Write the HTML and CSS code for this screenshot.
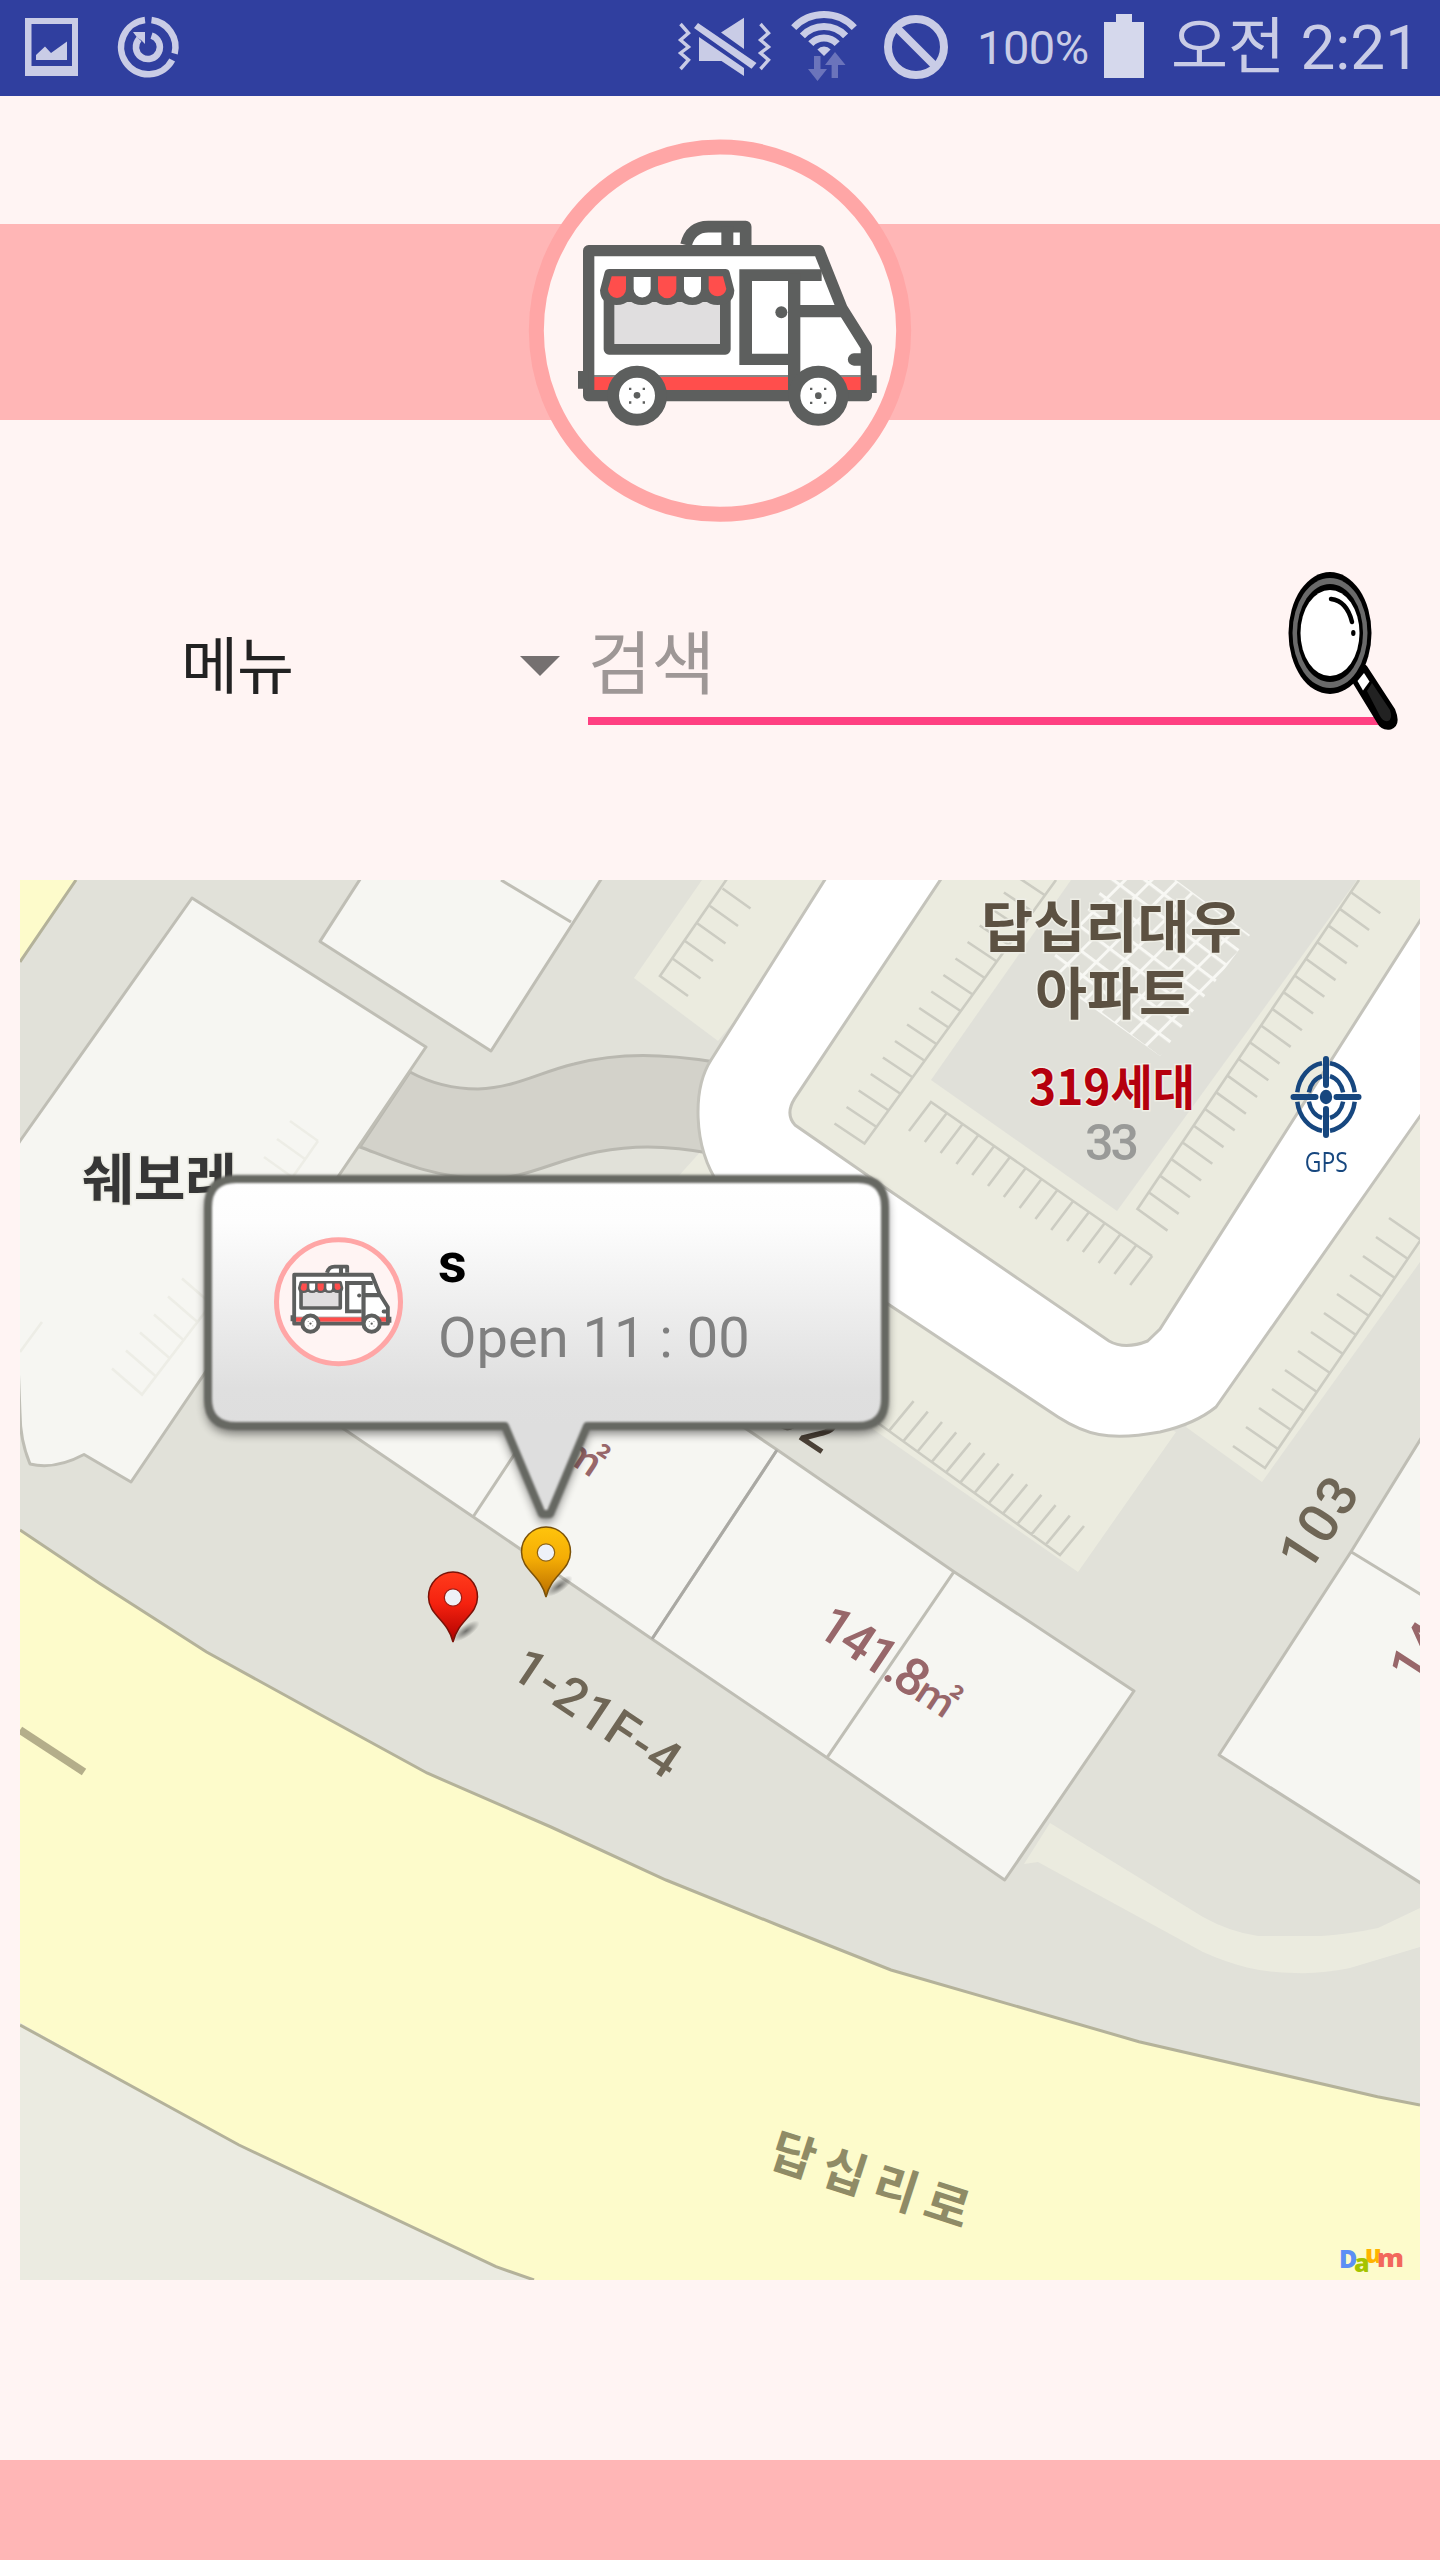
FILE: index.html
```html
<!DOCTYPE html>
<html lang="ko">
<head>
<meta charset="utf-8">
<title>푸드트럭 지도</title>
<link rel="stylesheet" href="styles.css">
</head>
<body>
<svg class="defs" width="0" height="0" aria-hidden="true">
  <symbol id="truck" viewBox="0 0 1200 1200">
    <circle cx="600" cy="602" r="551" fill="#fff4f3" stroke="#ffa6a6" stroke-width="45"/>
    <path d="M498 345q14-55 67-55h112v55" fill="#fff" stroke="#5d5f5e" stroke-width="35" stroke-linejoin="round"/>
    <path d="M622 290v60" stroke="#5d5f5e" stroke-width="36"/>
    <path d="M206 363H898L966 530 1039 652V797H206z" fill="#fff"/>
    <path d="M222 741H1023V780H222z" fill="#ff4e4c"/>
    <path d="M222 738H1023" stroke="#5d5f5e" stroke-width="4"/>
    <path d="M206 362H897L966 535 1039 651V797H206z" fill="none" stroke="#5d5f5e" stroke-width="34" stroke-linejoin="round"/>
    <path d="M174 723h32v53h-32zM1040 736h30v53h-30z" fill="#5d5f5e"/>
    <path d="M658 418H905V453H696V671H806V705H658z" fill="#5d5f5e"/>
    <path d="M804 430h37v370h-37zM836 525h130v37h-130zM1026 670h-24a18 18 0 0 0 0 37h24z" fill="#5d5f5e"/>
    <circle cx="784" cy="547" r="18" fill="#5d5f5e"/>
    <path d="M267 500V658H616V500z" fill="#e0dedf" stroke="#5d5f5e" stroke-width="32" stroke-linejoin="round"/>
    <path d="M268 417H616q10 0 13 10l14 54q-2 44-50 44-26 0-38-14-14 14-38 14t-38-14q-13 14-38 14t-38-14q-12 14-37 14t-38-14q-14 14-38 14-48 0-50-44l14-54q3-10 14-10z" fill="#5d5f5e"/>
    <path d="M275 439h43v38a27 27 0 0 1-54 0zM414 439h55v38a27 27 0 0 1-55 0zM566 439h43l10 38a27 27 0 0 1-53 0z" fill="#ff4e4c"/>
    <path d="M341 441h51v36a25 25 0 0 1-51 0zM492 441h51v36a25 25 0 0 1-51 0z" fill="#fff"/>
    <g fill="#fff" stroke="#5d5f5e" stroke-width="36"><circle cx="351" cy="797" r="72"/><circle cx="895" cy="797" r="72"/></g>
    <g fill="#5d5f5e"><circle cx="351" cy="796" r="10"/><circle cx="895" cy="797" r="10"/>
    <path d="M327 773h7v7h-7zM368 773h7v7h-7zM327 814h7v7h-7zM368 814h7v7h-7zM870 773h7v7h-7zM912 773h7v7h-7zM870 815h7v7h-7zM912 815h7v7h-7z"/></g>
  </symbol>
</svg>

<header class="status">
  <svg class="photo" width="64" height="96" viewBox="20 0 64 96"><path fill-rule="evenodd" d="M25 18h53v58H25zM31.500 24v42H72V24z"/><path d="M36 60v-5l9-8.500 6 6.500 16-11.500V60z"/></svg>
  <svg class="sync" width="72" height="96" viewBox="112 0 72 96"><g fill="none" stroke="#c9cce6" stroke-width="6.500"><path d="M145 20.100A27.200 27.200 0 1 0 172.200 60"/><path d="M151.500 20.100A27.200 27.200 0 0 1 174.600 53.600"/><path d="M151.500 35.600A12 12 0 1 1 139 39"/></g><path d="M133 32h12v12l-4-4-3.500-2z"/></svg>
  <svg class="mute" width="96" height="96" viewBox="676 0 96 96"><path d="M698 23l58.500 40-5 5.700L694 28zM744 17.700V49l-23-16.500zM699 37l45 31v8l-22.500-15H699z"/><path d="M680.500 24l8 9-8 7 8 7-8 6 8 7-8 9M760.500 24l8 9-8 7 8 7-8 6 8 7-8 9" fill="none" stroke="#c9cce6" stroke-width="3.400"/></svg>
  <svg class="wifi" width="76" height="96" viewBox="786 0 76 96"><g fill="none" stroke="#c9cce6" stroke-width="7"><path d="M793.700 27.700A41.500 41.500 0 0 1 854.300 27.700"/><path d="M802.400 35.900A29.500 29.500 0 0 1 845.600 35.900"/><path d="M810.800 43.700A18 18 0 0 1 837.200 43.700"/></g><path d="M817.400 49.500a9 9 0 0 1 13.200 0L824 56z"/><path fill="#6b74bb" d="M814 56h6.500v13h6.500l-9.500 12L808 69h6zM831.600 78V65H825l10-13 10.500 13H838v13z"/></svg>
  <svg class="block" width="72" height="96" viewBox="880 0 72 96"><g fill="none" stroke="#c9cce6" stroke-width="8"><circle cx="916" cy="47" r="28"/><path d="M897 28l38 38"/></g></svg>
  <span class="percent">100%</span>
  <svg class="battery" width="40" height="96" viewBox="1104 0 40 96"><path d="M1116 14h16v8h12v56h-40V22h12z"/></svg>
  <span class="clock">오전 2:21</span>
</header>

<section class="hero">
  <div class="band"></div>
  <svg class="logo" width="400" height="400"><use href="#truck"/></svg>
</section>

<section class="search">
  <div class="menu"><span>메뉴</span><svg width="40" height="20" viewBox="0 0 40 20"><path d="M0 0h40L20 20z" fill="#757070"/></svg></div>
  <div class="field"><span>검색</span></div>
  <svg class="glass" width="120" height="170" viewBox="1280 565 120 170">
    <path d="M1355 680l9-12 28 43q5 12-2 15-7 1-10-5z" fill="#000" stroke="#000" stroke-width="7" stroke-linejoin="round"/>
    <path d="M1357.500 681l6.500-8 5.500 8.500-6.500 9z" fill="#fff"/>
    <path d="M1367 691l5-8 18 27q3 9-2 11-5 1-8-5z" fill="#222"/>
    <ellipse cx="1330" cy="633" rx="41.500" ry="61" fill="#000"/>
    <ellipse cx="1330" cy="633" rx="37.500" ry="55" fill="#6a6a6a"/>
    <ellipse cx="1330" cy="633" rx="33" ry="49" fill="#000"/>
    <ellipse cx="1330" cy="633" rx="29.500" ry="43" fill="#fff"/>
    <path d="M1331 599q16 2 21 23" fill="none" stroke="#000" stroke-width="4.500" stroke-linecap="round"/>
    <ellipse cx="1353.300" cy="633" rx="2.200" ry="3"/>
  </svg>
</section>

<main class="map">
  <svg class="tiles" width="1400" height="1400" viewBox="20 880 1400 1400">
    <defs>
      <pattern id="net" width="19" height="19" patternUnits="userSpaceOnUse" patternTransform="translate(1160 1056) rotate(37) skewX(-8)"><path d="M0 1.500H19M1.500 0V19" stroke="#f8f8f4" stroke-width="3" fill="none"/></pattern>
      <linearGradient id="red" x1="0" y1="0" x2="0" y2="1"><stop offset="0" stop-color="#ff3b1c"/><stop offset=".45" stop-color="#f5220f"/><stop offset="1" stop-color="#b00000"/></linearGradient>
      <linearGradient id="amber" x1="0" y1="0" x2="0" y2="1"><stop offset="0" stop-color="#ffc40c"/><stop offset=".45" stop-color="#f5ad05"/><stop offset="1" stop-color="#b86c00"/></linearGradient>
      <radialGradient id="cast"><stop offset="0" stop-color="#000" stop-opacity=".5"/><stop offset="1" stop-color="#000" stop-opacity="0"/></radialGradient>
    </defs>
    <rect x="20" y="880" width="1400" height="1400" fill="#e1e1d9"/>

    <!-- paved areas beside the ring road -->
    <g fill="#ebebdf">
      <path d="M702 880L634 978 718 1041 850 880zM702 1150L675 1180 870 1427 1078 1572 1176 1432 900 1300zM1186 1427L1262 1482 1420 1262V1090z"/>
      <path d="M1050 1823L1203 1917Q1230 1932 1258 1936H1322Q1350 1934 1378 1928L1420 1908V1947L1350 1968Q1322 1974 1295 1973 1272 1973 1249 1968 1225 1962 1203 1952L1038 1862 1024 1864z"/>
    </g>

    <!-- main road -->
    <path d="M10 1522L20 1530 99 1583 206.600 1652 321 1715 427 1773 551 1827 666 1880 780 1926 891 1970 1139 2041.700 1377.500 2096.700 1430 2107V2290H534L496 2266.700 239 2145 20 2023 10 2016zM10 870H84L76 880 20 960 10 974z" fill="#fdfbcb"/>
    <path d="M20 2023L239 2145 496 2266.700 534 2280H20z" fill="#ebebe1"/>
    <path d="M20 1530L99 1583 206.600 1652 321 1715 427 1773 551 1827 666 1880 780 1926 891 1970 1139 2041.700 1377.500 2096.700 1420 2105M20 2025L239 2145 496 2266.700 534 2280M76 880L20 962" fill="none" stroke="#b4b29a" stroke-width="3"/>
    <path d="M20 1730L84 1772" stroke="#b4ae8a" stroke-width="8"/>

    <!-- lane and ring road -->
    <path d="M410 1072C432 1084 455 1089 478 1089 515 1088 540 1072 574 1064 620 1052 665 1054 715 1062V1154C660 1144 630 1146 597 1152 555 1160 525 1180 482 1179 430 1176 400 1162 360 1147z" fill="#d3d2ca" stroke="#b9b8b0" stroke-width="3"/>
    <path d="M831 870L711 1060C693 1088 692 1145 719 1185 732 1200 750 1212 760 1219L1058 1417Q1080 1431 1099 1434.500 1122 1439 1160 1432 1195 1424 1216 1407L1430 1102V870z" fill="#fff" stroke="#c4c3bb" stroke-width="3"/>
    <path d="M947 870L794.600 1098.600Q785 1114 795 1125L880 1184 1109 1341Q1125 1350 1147.600 1341L1160 1329 1430 905V870z" fill="#ebebdf" stroke="#c4c3bb" stroke-width="3"/>
    <path d="M1071 880L931 1080 1117 1211 1357 880z" fill="#e0e0d9"/>
    <path d="M1109 880L1043 972 1160 1056 1250 935 1176 880z" fill="url(#net)"/>

    <!-- parking bays -->
    <g fill="none" stroke="#ccccc2" stroke-width="2.600">
      <path d="M731 873L660 976l28 20m-15.500-37.500l28 20m-15.500-37.500l28 20m-15.500-37.500l28 20m-15.500-37.500l28 20m-15.500-37.500l28 20"/>
      <path d="M1056 880L864.500 1143.500l-30-20m42.100 3.500l-30-20m42.100 3.500l-30-20m42.100 3.500l-30-20m42.100 3.500l-30-20m42.100 3.500l-30-20m42.100 3.500l-30-20m42.100 3.500l-30-20m42.100 3.500l-30-20m42.100 3.500l-30-20m42.100 3.500l-30-20m42.100 3.500l-30-20m42.100 3.500l-30-20m42.100 3.500l-30-20m42.100 3.500l-30-20m42.100 3.500l-30-20"/>
      <path d="M1152 1256L931 1102l-22 29m37.800-18l-22 29m37.800-18l-22 29m37.800-18l-22 29m37.800-18l-22 29m37.800-18l-22 29m37.800-18l-22 29m37.800-18l-22 29m37.800-18l-22 29m37.800-18l-22 29m37.800-18l-22 29m37.800-18l-22 29m37.800-18l-22 29m37.800-18l-22 29m37.800-18l-22 29"/>
      <path d="M1359 880L1137.500 1209l30 21.600m-18.800-38.300l30 21.600m-18.800-38.300l30 21.600m-18.800-38.300l30 21.600m-18.800-38.300l30 21.600m-18.800-38.300l30 21.600m-18.800-38.300l30 21.600m-18.800-38.300l30 21.600m-18.800-38.300l30 21.600m-18.800-38.300l30 21.600m-18.800-38.300l30 21.600m-18.800-38.300l30 21.600m-18.800-38.300l30 21.600m-18.800-38.300l30 21.600m-18.800-38.300l30 21.600m-18.800-38.300l30 21.600m-18.800-38.300l30 21.600m-18.800-38.300l30 21.600m-18.800-38.300l30 21.600m-18.800-38.300l30 21.600"/>
      <path d="M878 1423L1060 1555l24-29m-38.200 18.600l24-29m-38.200 18.600l24-29m-38.200 18.600l24-29m-38.200 18.600l24-29m-38.200 18.600l24-29m-38.200 18.600l24-29m-38.200 18.600l24-29m-38.200 18.600l24-29m-38.200 18.600l24-29m-38.200 18.600l24-29m-38.200 18.600l24-29m-38.200 18.600l24-29"/>
      <path d="M1420 1241L1265 1468l-32-22m45 3l-32-22m45 3l-32-22m45 3l-32-22m45 3l-32-22m45 3l-32-22m45 3l-32-22m45 3l-32-22m45 3l-32-22m45 3l-32-22m45 3l-32-22m45 3l-32-22m45 3l-32-22"/>
    </g>

    <!-- buildings -->
    <g fill="#f6f6f2" stroke="#bfbeb5" stroke-width="3" stroke-linejoin="round">
      <path d="M192 898L426 1047 131 1482 84 1454.500Q55 1470 30 1464 20 1440 20 1413L10 1156 20 1141z"/>
      <path d="M366 870L320 941.400 491 1051 607 870M501 880L571 922"/>
      <path d="M335 1423L473 1516.700 652 1639 827 1757.700 1004.700 1880 1134 1691 954 1571.700 777.400 1450 600 1330zM954 1571.700L827 1757.700M777 1450L652 1639M473 1517L535 1423"/>
      <path d="M1430 1424L1351 1551.700 1219 1755 1430 1889M1351 1551.700L1430 1600"/>
    </g>
    <path d="M777 1450L652 1639" stroke="#aaa9a4" stroke-width="3"/>
    <g fill="none" stroke="#ededE6" stroke-width="2.600">
      <path d="M215 1299L142 1394.500l-30-26m44 8l-30-26m44 8l-30-26m44 8l-30-26m44 8l-30-26m44 8l-30-26"/>
      <path d="M318 1141L280 1195m38-54l-28-20m15 38l-28-20m15 38l-28-20M42 1322l-22 30"/>
    </g>

    <!-- labels -->
    <g class="label">
      <g stroke="#eeeee6" stroke-width="3" paint-order="stroke">
        <text x="981" y="947" font-size="56" textLength="261" lengthAdjust="spacingAndGlyphs" fill="#5c5142">답십리대우</text>
        <text x="1035" y="1014" font-size="56" textLength="156" lengthAdjust="spacingAndGlyphs" fill="#5c5142">아파트</text>
        <text x="1029" y="1105" font-size="48" textLength="166" lengthAdjust="spacingAndGlyphs" fill="#b5000d">319세대</text>
        <text x="82" y="1199" font-size="55" textLength="155" lengthAdjust="spacingAndGlyphs" fill="#363636">쉐보레</text>
      </g>
      <text x="1085" y="1160" font-size="50" textLength="54" fill="#999a98" class="din">33</text>
      <g fill="#6f6656" class="din">
        <text transform="translate(508 1675) rotate(33.700)" font-size="51" textLength="190">1-21F-4</text>
        <text transform="translate(1308 1575) rotate(-57)" font-size="55" textLength="98">103</text>
        <text transform="translate(740 1400) rotate(33.700)" font-size="55" textLength="99" fill="#4a4036">102</text>
      </g>
      <g fill="#98676a" class="din">
        <text transform="translate(814 1633) rotate(33.700)" font-size="52" textLength="121">141.8</text>
        <text transform="translate(911 1697) rotate(33.700)" font-size="42" class="unit">㎡</text>
        <text transform="translate(558 1456) rotate(33.700)" font-size="42" class="unit">㎡</text>
        <text transform="translate(1417 1687) rotate(-57)" font-size="52">141.8</text>
      </g>
      <text transform="translate(767 2165) rotate(18)" font-size="48" textLength="206" fill="#8f8b66">답십리로</text>
    </g>
    <g class="daum" font-size="25"><text x="1339" y="2268" fill="#5c8ff5">D</text><text x="1354" y="2272" fill="#a5c400">a</text><text x="1365" y="2263" fill="#ffb400">u</text><text x="1377" y="2267" fill="#f2685c" textLength="27" lengthAdjust="spacingAndGlyphs">m</text></g>

    <!-- pins -->
    <ellipse cx="466" cy="1631" rx="16" ry="6" fill="url(#cast)" transform="rotate(-35 466 1631)"/>
    <path d="M453 1642C448 1620 428.500 1615 428.500 1597A24.500 25 0 0 1 477.500 1597C477.500 1615 458 1620 453 1642z" fill="url(#red)" stroke="#7a1208" stroke-width="1.500"/>
    <circle cx="453" cy="1597.500" r="8.700" fill="#eef1f8" stroke="#9b1a10" stroke-width="1.200"/>
    <ellipse cx="559" cy="1586" rx="16" ry="6" fill="url(#cast)" transform="rotate(-35 559 1586)"/>
    <path d="M546 1597C541 1575 521.500 1570 521.500 1552A24.500 25 0 0 1 570.500 1552C570.500 1570 551 1575 546 1597z" fill="url(#amber)" stroke="#7c5208" stroke-width="1.500"/>
    <circle cx="546" cy="1552.500" r="8.700" fill="#eef1f8" stroke="#8d6110" stroke-width="1.200"/>
  </svg>

  <button class="gps" type="button">
    <svg width="76" height="90" viewBox="1288 1053 76 90" fill="none" stroke="#17477f">
      <path stroke-width="4.500" d="M1330 1063.300A29 34 0 0 1 1354.700 1092.300M1354.700 1101.700A29 34 0 0 1 1330 1130.700M1322 1130.700A29 34 0 0 1 1297.300 1101.700M1297.300 1092.300A29 34 0 0 1 1322 1063.300M1330 1076.100A17.500 21.500 0 0 1 1343.100 1092.300M1343.100 1101.700A17.500 21.500 0 0 1 1330 1117.900M1322 1117.900A17.500 21.500 0 0 1 1308.900 1101.700M1308.900 1092.300A17.500 21.500 0 0 1 1322 1076.100"/>
      <path stroke-width="6" stroke-linecap="round" d="M1326 1059v26M1326 1109v26M1293.500 1097h22M1336.500 1097h22"/>
      <ellipse cx="1326" cy="1097" rx="6.200" ry="7.200" fill="#17477f" stroke="none"/>
    </svg>
    <span>GPS</span>
  </button>

  <div class="callout">
    <svg class="bubble" width="720" height="370" viewBox="190 1160 720 370">
      <defs>
        <linearGradient id="sheen" x1="0" y1="1178" x2="0" y2="1426" gradientUnits="userSpaceOnUse"><stop offset="0" stop-color="#fff"/><stop offset=".18" stop-color="#fdfdfd"/><stop offset=".85" stop-color="#dfdfdf"/><stop offset="1" stop-color="#dedede"/></linearGradient>
        <filter id="drop" x="-5%" y="-5%" width="110%" height="115%"><feGaussianBlur stdDeviation="5"/></filter>
        <filter id="soft" x="-5%" y="-5%" width="110%" height="110%"><feGaussianBlur stdDeviation="1"/></filter>
        <path id="shape" d="M236 1179H858Q885 1179 885 1207V1399Q885 1426 858 1426H587L550 1514H542L505 1426H236Q208 1426 208 1399V1207Q208 1179 236 1179z"/>
      </defs>
      <use href="#shape" transform="translate(0 5)" fill="#000" stroke="#000" stroke-width="6" opacity=".45" filter="url(#drop)"/>
      <use href="#shape" fill="url(#sheen)"/>
      <use href="#shape" fill="none" stroke="#666762" stroke-width="8" stroke-linejoin="round" filter="url(#soft)"/>
    </svg>
    <div class="info">
      <svg class="thumb" width="135" height="135"><use href="#truck"/></svg>
      <div class="lines"><strong>s</strong><span>Open 11 : 00</span></div>
    </div>
  </div>
</main>

<footer class="foot"></footer>
</body>
</html>
```
FILE: styles.css
```css
* { box-sizing: border-box; }
body {
  margin: 0;
  width: 1440px;
  height: 2560px;
  display: flex;
  flex-direction: column;
  overflow: hidden;
  background: #fff4f3;
  font-family: Roboto, "Noto Sans CJK KR", sans-serif;
}
svg { display: block; flex: none; }
.defs { position: absolute; }

.status {
  flex: none;
  height: 96px;
  padding-left: 20px;
  display: flex;
  align-items: center;
  background: #303f9f;
  color: #c9cce6;
  fill: #c9cce6;
  white-space: nowrap;
}
.sync { margin-left: 28px; }
.mute { margin-left: 492px; }
.wifi { margin-left: 14px; }
.block { margin-left: 18px; }
.percent { width: 127px; margin-left: 25px; font-size: 47px; font-weight: 400; letter-spacing: -0.5px; line-height: 96px; }
.battery { fill: #d5d8ec; }
.clock { margin-left: 27px; font-size: 62px; font-weight: 400; line-height: 98px; }

.hero {
  flex: none;
  height: 434px;
  display: grid;
  justify-items: center;
}
.hero > * { grid-area: 1 / 1; }
.band { width: 100%; height: 196px; margin-top: 128px; background: #ffb6b6; }
.logo { margin-top: 34px; }

.search {
  flex: none;
  height: 350px;
  padding-top: 35px;
  display: flex;
  align-items: flex-start;
}
.menu {
  width: 560px;
  height: 201px;
  padding-left: 181px;
  display: flex;
  align-items: center;
  justify-content: space-between;
  font-size: 62px;
  letter-spacing: -1px;
  color: #222;
}
.menu span { margin-bottom: 8px; }
.field {
  width: 794px;
  height: 160px;
  margin-left: 28px;
  border-bottom: 8px solid #ff4081;
  display: flex;
  align-items: flex-end;
  font-size: 69px;
  line-height: 97px;
  padding-bottom: 3px;
  color: #9e9796;
}
.glass { margin-left: -102px; }

.map {
  flex: none;
  width: 1400px;
  height: 1400px;
  margin: 0 20px;
  position: relative;
  overflow: hidden;
}
.label { font-family: "Noto Sans CJK KR", sans-serif; font-weight: 700; }
.label .din { font-family: Roboto, sans-serif; font-weight: 500; }
.label .unit { font-family: "Noto Sans CJK KR", sans-serif; }
.daum { font-family: "Open Sans", sans-serif; font-weight: 800; }

.gps {
  position: absolute;
  left: 1261px;
  top: 173px;
  width: 90px;
  padding: 0;
  border: 0;
  background: none;
  display: flex;
  flex-direction: column;
  align-items: center;
  gap: 2px;
  font-family: "Open Sans", sans-serif;
  font-size: 27px;
  line-height: 34px;
  color: #17477f;
}
.gps span { transform: scaleX(.85); }

.callout {
  position: absolute;
  left: 170px;
  top: 280px;
  width: 720px;
  height: 370px;
  display: grid;
}
.callout > * { grid-area: 1 / 1; }
.info {
  height: 248px;
  margin-top: 17px;
  padding-left: 81px;
  display: flex;
  align-items: center;
  gap: 32px;
}
.lines { display: flex; flex-direction: column; font-size: 56px; line-height: 75px; white-space: pre; }
.lines strong { color: #000; font-weight: 700; }
.lines span { color: #808080; }

.foot { flex: none; height: 100px; margin-top: 180px; background: #ffb6b6; }
```
